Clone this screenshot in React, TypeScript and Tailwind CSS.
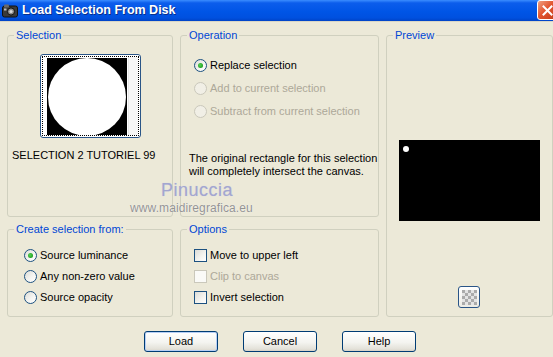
import type { ReactNode } from "react"
import clsx from "clsx"

function GroupBox({ label, className, children }: { label: string; className?: string; children?: ReactNode }) {
  return (
    <div className={clsx("relative rounded-[3px] border border-[#D0D0BF]", className)}>
      <span className="absolute -top-[7px] left-[6px] bg-[#ECE9D8] px-[2px] leading-[13px] text-[#0046D5]">
        {label}
      </span>
      {children}
    </div>
  )
}

function Radio({ checked, disabled }: { checked?: boolean; disabled?: boolean }) {
  return (
    <span
      className={clsx(
        "flex h-[13px] w-[13px] shrink-0 items-center justify-center rounded-full border",
        disabled
          ? "border-[#CAC8BB] bg-[#F1EFE6]"
          : "border-[#1C5180] bg-[linear-gradient(135deg,#DCDCD7_0%,#F6F6F3_60%,#FFFFFF_100%)]"
      )}
    >
      {checked && (
        <span className="h-[5px] w-[5px] rounded-full bg-[radial-gradient(circle_at_40%_40%,#55D355_0%,#21A121_70%,#1A8A1A_100%)]" />
      )}
    </span>
  )
}

function Checkbox({ disabled }: { disabled?: boolean }) {
  return (
    <span
      className={clsx(
        "h-[13px] w-[13px] shrink-0 border",
        disabled
          ? "border-[#CAC8BB] bg-[#FAFAF7]"
          : "border-[#1C5180] bg-[linear-gradient(135deg,#DCDCD7_0%,#F4F4F0_60%,#FFFFFF_100%)]"
      )}
    />
  )
}

function Option({ children, disabled, control }: { children: ReactNode; disabled?: boolean; control: ReactNode }) {
  return (
    <div className={clsx("flex items-center gap-[3px]", disabled ? "text-[#ACA899]" : "text-black")}>
      {control}
      <span className="leading-[13px]">{children}</span>
    </div>
  )
}

function XpButton({ children, isDefault }: { children: ReactNode; isDefault?: boolean }) {
  return (
    <button
      className={clsx(
        "flex h-[21px] w-[74px] items-center justify-center rounded-[3px] border border-[#003C74] bg-[linear-gradient(to_bottom,#FFFFFF_0%,#F4F4F0_55%,#E3E1D8_90%,#D6D0C5_100%)] leading-[13px] text-black",
        isDefault && "shadow-[inset_0_0_0_1px_#B7CFF5]"
      )}
    >
      {children}
    </button>
  )
}

function TitleBar() {
  return (
    <div className="flex h-[21px] items-center overflow-hidden bg-[linear-gradient(to_bottom,#3B8DFF_0%,#0C5DEC_14%,#0055E6_55%,#0050DF_85%,#0043C6_100%)] pl-[2px]">
      <svg width="16" height="14" viewBox="0 0 16 14" className="shrink-0">
        <rect x="0.5" y="2" width="15" height="11" rx="2" fill="#3A3A3A" stroke="#111" />
        <rect x="2" y="0.5" width="5" height="3" rx="1" fill="#6A6A6A" />
        <circle cx="9" cy="7.5" r="3.6" fill="#8C8C8C" stroke="#111" />
        <circle cx="9" cy="7.5" r="1.6" fill="#D9D9D9" />
        <rect x="2" y="4.5" width="2.5" height="2" fill="#BDBDBD" />
      </svg>
      <span className="ml-[4px] text-[12.5px] font-bold leading-[15px] text-white [text-shadow:1px_1px_0_#0A2F8A]">
        Load Selection From Disk
      </span>
      <span className="ml-auto -mr-[5px] flex h-[20px] w-[21px] shrink-0 items-center justify-center self-start rounded-[3px] border border-white bg-[linear-gradient(135deg,#F0A080_0%,#E2552F_45%,#C23A17_100%)]">
        <svg width="11" height="11" viewBox="0 0 11 11">
          <path d="M1.5 1.5 L9.5 9.5 M9.5 1.5 L1.5 9.5" stroke="white" strokeWidth="2" strokeLinecap="square" />
        </svg>
      </span>
    </div>
  )
}

function Thumbnail() {
  return (
    <div className="h-[84px] w-[101px] rounded-[3px] border border-[#2A5587] bg-white p-px">
      <div className="flex h-full w-full border border-dotted border-black bg-white">
        <div className="ml-[4px] mt-px flex h-[77px] w-[80px] items-center justify-center overflow-hidden bg-black">
          <div className="h-[78px] w-[78px] shrink-0 rounded-full bg-white blur-[0.7px]" />
        </div>
        <div className="ml-px flex-1 border-l border-[#E6E6E6] bg-[#F6F6F6]" />
      </div>
    </div>
  )
}

function Checker() {
  const cells = Array.from({ length: 25 }, (_, i) => (Math.floor(i / 5) + (i % 5)) % 2 === 0)
  return (
    <div className="flex h-[22px] w-[22px] items-center justify-center rounded-[3px] border border-[#2A5587] bg-[linear-gradient(to_bottom,#FFFFFF,#ECEBE4)]">
      <div className="grid grid-cols-[repeat(5,3px)] grid-rows-[repeat(5,3px)]">
        {cells.map((dark, i) => (
          <span key={i} className={dark ? "bg-[#ABABAB]" : "bg-[#E4E4E4]"} />
        ))}
      </div>
    </div>
  )
}

export default function App() {
  return (
    <div className="relative h-[357px] w-[553px] overflow-hidden bg-[#ECE9D8] font-['Liberation_Sans',Arial,sans-serif] text-[11px] text-black">
      <TitleBar />
      <div className="h-px bg-[#D9D6C6]" />

      <div className="grid grid-cols-[166px_199px_167px] grid-rows-[182px_88px] gap-x-[7px] gap-y-[12px] pl-[7px] pt-[13px]">
        <GroupBox label="Selection" className="col-start-1 row-start-1 pl-[4px] pt-[18px]">
          <div className="pl-[28px]">
            <Thumbnail />
          </div>
          <p className="mt-[11px] leading-[13px]">SELECTION 2 TUTORIEL 99</p>
        </GroupBox>

        <GroupBox label="Operation" className="col-start-2 row-start-1 pt-[18px]">
          <div className="flex flex-col pl-[13px]">
            <div className="flex h-[23px] items-center">
              <Option control={<Radio checked />}>Replace selection</Option>
            </div>
            <div className="flex h-[23px] items-center">
              <Option disabled control={<Radio disabled />}>Add to current selection</Option>
            </div>
            <div className="flex h-[23px] items-center">
              <Option disabled control={<Radio disabled />}>Subtract from current selection</Option>
            </div>
          </div>
          <p className="mt-[29px] pl-[8px] leading-[13px]">
            The original rectangle for this selection
            <br />
            will completely intersect the canvas.
          </p>
        </GroupBox>

        <GroupBox label="Preview" className="col-start-3 row-span-2 row-start-1 pl-[12px] pt-[104px]">
          <div className="relative h-[81px] w-[141px] bg-black">
            <span className="absolute left-[4px] top-[6px] h-[6px] w-[6px] rounded-full bg-white" />
          </div>
          <div className="mt-[65px] pl-[59px]">
            <Checker />
          </div>
        </GroupBox>

        <GroupBox label="Create selection from:" className="col-start-1 row-start-2 pl-[16px] pt-[15px]">
          <div className="flex flex-col">
            <div className="flex h-[21px] items-center">
              <Option control={<Radio checked />}>Source luminance</Option>
            </div>
            <div className="flex h-[21px] items-center">
              <Option control={<Radio />}>Any non-zero value</Option>
            </div>
            <div className="flex h-[21px] items-center">
              <Option control={<Radio />}>Source opacity</Option>
            </div>
          </div>
        </GroupBox>

        <GroupBox label="Options" className="col-start-2 row-start-2 pl-[13px] pt-[15px]">
          <div className="flex flex-col">
            <div className="flex h-[21px] items-center">
              <Option control={<Checkbox />}>Move to upper left</Option>
            </div>
            <div className="flex h-[21px] items-center">
              <Option disabled control={<Checkbox disabled />}>Clip to canvas</Option>
            </div>
            <div className="flex h-[21px] items-center">
              <Option control={<Checkbox />}>Invert selection</Option>
            </div>
          </div>
        </GroupBox>
      </div>

      <div className="flex gap-[25px] pl-[144px] pt-[14px]">
        <XpButton isDefault>Load</XpButton>
        <XpButton>Cancel</XpButton>
        <XpButton>Help</XpButton>
      </div>

      {/* watermark laid over the dialog */}
      <span className="pointer-events-none absolute left-[161px] top-[180px] text-[18px] leading-[20px] tracking-[0.5px] text-[#A3A6CF] [text-shadow:0_0_1px_#C9CBE3]">
        Pinuccia
      </span>
      <span className="pointer-events-none absolute left-[130px] top-[202px] text-[12px] leading-[13px] tracking-[0.1px] text-[#939393] [text-shadow:0_0_1px_#FFFFFF]">
        www.maidiregrafica.eu
      </span>
    </div>
  )
}
